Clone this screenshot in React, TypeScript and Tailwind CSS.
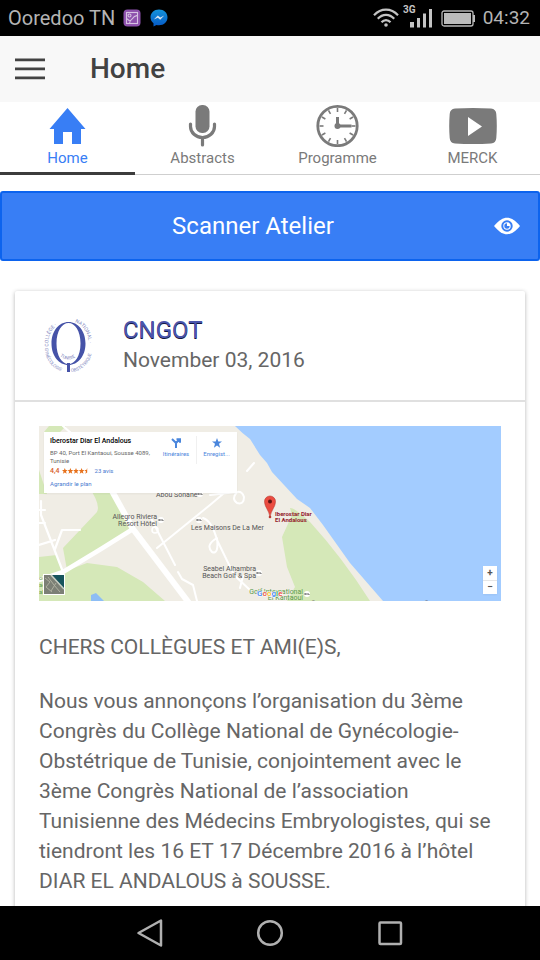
import React from "react";

const tickAngles = [0, 30, 60, 90, 120, 150, 180, 210, 240, 270, 300, 330];

function StatusBar() {
  return (
    <div className="flex h-9 shrink-0 items-center bg-black pr-[10px] pl-2 text-[#b4b4b4]">
      <span className="text-[20px] leading-9">Ooredoo TN</span>
      <svg className="ml-2 h-[18px] w-[18px]" viewBox="0 0 18 18" fill="none" aria-hidden="true">
        <rect x="0.5" y="0.5" width="17" height="17" rx="4" fill="#8e52ad" />
        <g stroke="#d6c2e2" strokeWidth="1.1">
          <rect x="3.5" y="3.5" width="11" height="11" />
          <circle cx="6.5" cy="6.5" r="1.5" />
          <path d="M6.5 14.5C7 10 9 11 10 9s2-2 4.500-2.500M3.500 9.500l4 3" />
        </g>
      </svg>
      <svg className="ml-[9px] h-[18px] w-[18px]" viewBox="0 0 18 18" aria-hidden="true">
        <defs>
          <linearGradient id="chat" x1="0" y1="0" x2="0" y2="1">
            <stop offset="0" stopColor="#1494dc" />
            <stop offset="1" stopColor="#0658c4" />
          </linearGradient>
        </defs>
        <path d="M9 0.500C4 0.500 0.500 4 0.500 8.300c0 2.500 1.200 4.500 3 6V17.500l3-1.500c.8.200 1.600.3 2.500.3 5 0 8.500-3.500 8.500-8S14 .5 9 .5Z" fill="url(#chat)" />
        <path d="M3.800 10.500 7.800 6.500l2.500 2 3.900-2-4 4.200-2.400-2Z" fill="#d5e5f2" />
      </svg>
      <svg className="ml-auto h-[20px] w-[26px]" viewBox="0 0 26 20" fill="none" stroke="#c4c4c4" strokeWidth="2.200" aria-hidden="true">
        <path d="M1 7.200C8-.3 18-.3 25 7.200M4.800 10.800C9.500 5.600 16.500 5.600 21.200 10.800M8.500 14.200c2.600-2.900 6.400-2.900 9 0" />
        <circle cx="13" cy="17" r="1.800" fill="#c4c4c4" stroke="none" />
      </svg>
      <div className="flex h-9 items-start">
        <span className="ml-1 mt-1 text-[10px] leading-3 font-bold text-[#c4c4c4]">3G</span>
        <svg className="-ml-[6px] mt-2 h-5 w-6" viewBox="0 0 24 20" fill="#c4c4c4" aria-hidden="true">
          <path d="M0 14h4v5.500H0zM7 10h3v9.500H7zM13 5.500h3v14h-3zM19 1h3v18.500h-3z" />
        </svg>
      </div>
      <svg className="ml-[7px] h-[17px] w-[35px]" viewBox="0 0 35 17" aria-hidden="true">
        <rect x="1" y="1" width="31" height="15" rx="2" fill="none" stroke="#b8b8b8" strokeWidth="1.300" />
        <rect x="3" y="3" width="27" height="11" fill="#bcbcbc" />
        <path d="M32 5h2v7h-2z" fill="#bcbcbc" />
      </svg>
      <span className="ml-[7px] text-[19px] leading-9">04:32</span>
    </div>
  );
}

function HomeIcon() {
  return (
    <svg className="h-11 w-12" viewBox="0 0 48 44" fill="currentColor" aria-hidden="true">
      <path d="M23.500 5 41.500 26H37V41H28V29H19V41H10V26H5.500Z" />
    </svg>
  );
}

function MicIcon() {
  return (
    <svg className="h-11 w-12" viewBox="0 0 48 44" aria-hidden="true">
      <rect x="16.500" y="2" width="14" height="28" rx="6.500" fill="currentColor" />
      <path d="M11.500 21v2.500a12 11 0 0 0 24 0V21M23.500 35v7" fill="none" stroke="currentColor" strokeWidth="3.200" strokeLinecap="round" />
    </svg>
  );
}

function ClockIcon() {
  return (
    <svg className="h-11 w-12" viewBox="0 0 48 44" fill="none" stroke="currentColor" aria-hidden="true">
      <circle cx="23.500" cy="23" r="19.700" strokeWidth="2.800" />
      {tickAngles.map((a) => (
        <path key={a} d="M23.500 5v4" strokeWidth="1.600" transform={`rotate(${a} 23.5 23)`} />
      ))}
      <path d="M23.500 14v9h14" strokeWidth="3" />
      <circle cx="23.500" cy="23" r="3" fill="currentColor" stroke="none" />
    </svg>
  );
}

function VideoIcon() {
  return (
    <svg className="h-11 w-12" viewBox="0 0 48 44" aria-hidden="true">
      <path d="M6 5.500Q24 4.300 42 5.500Q47 6 47.300 11Q48.300 23 47.300 35Q47 40 42 40.500Q24 41.700 6 40.500Q1 40 .700 35Q-.300 23 .700 11Q1 6 6 5.500Z" fill="currentColor" />
      <path d="M19 14v19l14-9.500Z" fill="#fff" />
    </svg>
  );
}

const tabs = [
  { label: "Home", icon: HomeIcon, active: true },
  { label: "Abstracts", icon: MicIcon, active: false },
  { label: "Programme", icon: ClockIcon, active: false },
  { label: "MERCK", icon: VideoIcon, active: false },
];

function Tabs() {
  return (
    <nav className="grid shrink-0 grid-cols-4 bg-white">
      {tabs.map(({ label, icon: Icon, active }) => (
        <button
          key={label}
          type="button"
          aria-current={active ? "page" : undefined}
          className={
            active
              ? "flex h-[73px] flex-col items-center border-b-3 border-[#3c3c3c] pt-px text-[#387ef5]"
              : "flex h-[73px] flex-col items-center border-b border-[#cfcfcf] pt-px text-[#7a7a7a]"
          }
        >
          <Icon />
          <span className="text-[15px] leading-[22px]">{label}</span>
        </button>
      ))}
    </nav>
  );
}

function CollegeLogo() {
  return (
    <svg className="h-14 w-[60px] shrink-0" viewBox="1 1 60 56" aria-hidden="true">
      <defs>
        <path id="ring-left" d="M11 32A20 22 0 0 1 25 5" />
        <path id="ring-right" d="M37 5A20 22 0 0 1 50 31" />
        <path id="ring-bottom-left" d="M7 31A22 24 0 0 0 29 55" />
        <path id="ring-bottom-right" d="M33 55A22 24 0 0 0 54 30" />
        <path id="ring-inner" d="M22 39Q30 46 39 39" />
      </defs>
      <path fillRule="evenodd" fill="#4653a8" d="M30.500 5C21 5 13.500 14 13.500 26.500S21 48 30.500 48 47.500 39 47.500 26.500 40 5 30.500 5Zm0 1C37 6 42.500 14 42.500 26.500S37 47 30.500 47 18.500 39 18.500 26.500 24 6 30.500 6Z" />
      <path d="M29 46h3v9h-3z" fill="#4653a8" />
      <g fill="#7c84bd" fontFamily="Roboto, sans-serif" fontSize="5">
        <text><textPath href="#ring-left">· COLLÈGE ·</textPath></text>
        <text><textPath href="#ring-right">NATIONAL ·</textPath></text>
        <text fontSize="4.500"><textPath href="#ring-bottom-left">GYNÉCOLOGIE</textPath></text>
        <text fontSize="4.500"><textPath href="#ring-bottom-right">OBSTÉTRIQUE</textPath></text>
        <text fontSize="4.500"><textPath href="#ring-inner">TUNISIE</textPath></text>
      </g>
    </svg>
  );
}

function MapDrawing() {
  return (
    <svg className="block h-full w-full" viewBox="0 0 462 175" preserveAspectRatio="xMinYMin slice" role="img" aria-label="Iberostar Diar El Andalous">
      <rect width="462" height="175" fill="#f0ede5" />
      <g fill="#d5e8b8">
        <path d="M10 0h17l-6 6H5ZM0 44l8 24H0ZM48 60h22l11 24 11 22-64 38-4-22 34-36q4-8-9-26ZM0 131l18-2 6 17 24-9 30 4 26 15 22 19H0Z" />
        <path d="M251 82q4-1 20 14 32 35 60 79h-83l8-14-8-20-5-30 10-22Z" />
      </g>
      <path d="M52 175v-6l5-2 8 8Z" fill="#8dbdf5" />
      <path d="M196 0q8 8 15 13l10 16 7 8 5 9 25 27 13 9 13 17 27 38 33 38H462V0Z" fill="#a3ccff" />
      <g fill="none" stroke="#fff" strokeLinecap="round" strokeLinejoin="round">
        <path d="M68 56 94 103 150 177" strokeWidth="6" />
        <path d="M94 103 62 123 24 146 0 154" strokeWidth="4.500" />
        <path d="M2 75v14l22 57M0 119l16-5M16 123l7-19h18M0 84h6M0 97h6M24 0l9 8" strokeWidth="2.200" />
        <path d="M118 122 171 79 197 57M208 45l7-8M112 92l7 14 17 33M139 146l4 7 11 6 4 16M164 92q9 3 14 22l17 35 16 15M198 66q-6 7 0 11 7 2 7-6-2-6-7-5ZM178 112q-12 7-5 14 7 3 5-14ZM171 69l27-3M204 150l-3 12" strokeWidth="2" />
        <circle cx="116" cy="104" r="3" strokeWidth="1.500" />
      </g>
      <g fontFamily="Roboto, sans-serif" fontSize="7" fill="#555">
        <text x="117" y="71">Abou Sonane</text>
        <text x="118" y="93" textAnchor="end">Allegro Riviera</text>
        <text x="118" y="100" textAnchor="end">Resort Hôtel</text>
        <text x="152" y="104">Les Maisons De La Mer</text>
        <text x="217" y="145" textAnchor="end">Seabel Alhambra</text>
        <text x="217" y="152" textAnchor="end">Beach Golf &amp; Spa</text>
        <g fill="#5c9a4c">
          <text x="264" y="168" textAnchor="end">Golf International</text>
          <text x="264" y="174" textAnchor="end">El Kantaoui</text>
          <text x="0" y="154" fontSize="6">or</text>
          <text x="0" y="161" fontSize="6">ac</text>
          <text x="0" y="168" fontSize="6">al</text>
        </g>
        <text x="272" y="179" fontSize="6">©2016 Google - Données cartographiques ©2016 Google</text>
        <g fill="#93202c" fontWeight="700" fontSize="6">
          <text x="236" y="90">Iberostar Diar</text>
          <text x="236" y="96">El Andalous</text>
        </g>
        <text x="218" y="170" fontSize="8" fontWeight="500" stroke="#fff" strokeWidth="1" paintOrder="stroke">
          <tspan fill="#4285f4">G</tspan><tspan fill="#ea4335">o</tspan><tspan fill="#fbbc05">o</tspan><tspan fill="#4285f4">g</tspan><tspan fill="#34a853">l</tspan><tspan fill="#ea4335">e</tspan>
        </text>
      </g>
      {[[122, 94], [160, 94], [220, 147], [161, 68], [268, 168]].map(([x, y]) => (
        <g key={x}>
          <circle cx={x} cy={y} r="3" fill="#fff" />
          <path d={`M${x - 2} ${y + 1}v-2M${x - 2} ${y}h4v1`} stroke="#666" strokeWidth="1" fill="none" />
        </g>
      ))}
      <path d="M231 91C230 84 225.500 81 225.500 75.500a5.500 5.500 0 0 1 11 0C236.500 81 232 84 231 91Z" fill="#ea4c40" stroke="#b93a33" strokeWidth=".6" />
      <circle cx="231" cy="75.500" r="2" fill="#5d1413" />
      <circle cx="231" cy="91" r="1.300" fill="#b93a33" />
      <rect x="4" y="148" width="22" height="21" fill="#fff" />
      <rect x="5" y="149" width="20" height="19" fill="#7c8076" />
      <path d="M13 149h12v14Z" fill="#17545c" />
      <path d="m12 149 13 14" stroke="#c8cfc4" strokeWidth="1.500" />
      <path d="m6 152 5 4-4 5 6 5M9 151l6 8 6 7M17 157l-5 8" stroke="#afb0a0" strokeWidth="1" fill="none" />
    </svg>
  );
}

function VenueMap() {
  return (
    <div className="relative h-[175px] overflow-hidden">
      <MapDrawing />
      <div className="absolute top-[6px] left-[5px] flex h-[61px] w-[193px] bg-white pt-1 pl-[6px] shadow-xs">
        <div className="w-[106px] shrink-0 text-[6px] leading-2 whitespace-nowrap text-[#666]">
          <p className="text-[7px] leading-[10px] font-medium text-black">Iberostar Diar El Andalous</p>
          <p className="mt-[3px]">BP 40, Port El Kantaoui, Sousse 4089,</p>
          <p>Tunisie</p>
          <p className="mt-[2px] flex items-center">
            <span className="text-[7px] font-medium text-[#d8602a]">4,4</span>
            <svg className="ml-[2px] h-[6px] w-7" viewBox="0 0 28 6" fill="#e7711b" aria-hidden="true">
              {[0, 1, 2, 3].map((i) => (
                <path key={i} transform={`translate(${i * 5.6} 0)`} d="M2.800 0l.8 2h2L4 3.400l.7 2.300-1.900-1.300L.9 5.700l.7-2.300L0 2h2Z" />
              ))}
              <path transform="translate(22.4 0)" d="M2.800 0v4.400L.9 5.700l.7-2.300L0 2h2Z" />
            </svg>
            <a href="#avis" className="ml-[5px] text-[#4a7bd0]">23 avis</a>
          </p>
          <a href="#plan" className="mt-[5px] block text-[#4a7bd0]">Agrandir le plan</a>
        </div>
        <a href="#itineraires" className="flex w-[40px] flex-col items-center pt-[2px] text-[6px] leading-2 text-[#4a86dc]">
          <svg className="h-[10px] w-[10px]" viewBox="0 0 10 10" fill="none" stroke="#4a86dc" strokeWidth="2" aria-hidden="true">
            <path d="M5 10V5L1 1M5 5l3-3M5.500 1.200H9v3.500" />
          </svg>
          <span className="mt-[2px]">Itinéraires</span>
        </a>
        <a href="#enregistrer" className="flex h-7 w-[40px] flex-col items-center border-l border-[#f0f0f0] pt-[2px] text-[6px] leading-2 text-[#4a86dc]">
          <svg className="h-[10px] w-[10px]" viewBox="0 0 10 10" fill="#4a86dc" aria-hidden="true">
            <path d="m5 0 1.300 3.500H10L7 5.800 8.100 9.700 5 7.400 1.900 9.700 3 5.800 0 3.500h3.700Z" />
          </svg>
          <span className="mt-[2px]">Enregist...</span>
        </a>
      </div>
      <div className="absolute right-1 bottom-[7px] flex h-7 w-[14px] flex-col divide-y divide-[#e6e6e6] bg-white text-[10px] font-bold text-[#555] shadow-xs">
        <button type="button" aria-label="Zoom in" className="flex flex-1 items-center justify-center leading-3">+</button>
        <button type="button" aria-label="Zoom out" className="flex flex-1 items-center justify-center leading-3">−</button>
      </div>
    </div>
  );
}

function NavBar() {
  return (
    <div className="flex h-[54px] shrink-0 items-center justify-center gap-[90px] bg-black text-[#b0b0b0]">
      <button type="button" aria-label="Back">
        <svg className="h-[30px] w-[30px]" viewBox="0 0 30 30" fill="none" stroke="currentColor" strokeWidth="2.500" strokeLinejoin="round">
          <path d="M26 2.500v25L3.500 15Z" />
        </svg>
      </button>
      <button type="button" aria-label="Home screen">
        <svg className="h-[30px] w-[30px]" viewBox="0 0 30 30" fill="none" stroke="currentColor" strokeWidth="2.500">
          <circle cx="15" cy="15" r="11.800" />
        </svg>
      </button>
      <button type="button" aria-label="Recent apps">
        <svg className="h-[30px] w-[30px]" viewBox="0 0 30 30" fill="none" stroke="currentColor" strokeWidth="2.500">
          <rect x="4.500" y="4.500" width="21.500" height="21.500" rx="1" />
        </svg>
      </button>
    </div>
  );
}

export default function App() {
  return (
    <div className="flex h-screen flex-col overflow-hidden bg-white font-[Roboto,sans-serif]">
      <StatusBar />
      <header className="flex h-[66px] shrink-0 items-center gap-[45px] bg-[#f8f8f8] px-[15px] text-[#424242]">
        <button type="button" aria-label="Menu">
          <svg className="h-6 w-[30px]" viewBox="0 0 30 24" fill="currentColor">
            <path d="M0 1.500h30v2.700H0zM0 10.500h30v2.700H0zM0 19.500h30v2.700H0z" />
          </svg>
        </button>
        <h1 className="text-[28px] leading-10 font-medium">Home</h1>
      </header>
      <Tabs />
      <main className="min-h-0 flex-1 overflow-hidden pt-4">
        <button type="button" className="relative block h-[70px] w-full rounded-[3px] border-2 border-[#0c63ee] bg-[#387ef5] pr-[34px] text-[24px] text-white">
          Scanner Atelier
          <svg className="absolute top-6 right-[18px] h-[18px] w-[26px]" viewBox="0 0 26 18" aria-hidden="true">
            <path d="M0 9C5 3 9 .7 13 .7S21 3 26 9c-5 6-9 8.300-13 8.300S5 15 0 9Z" fill="#fff" />
            <circle cx="13" cy="9" r="4.700" fill="none" stroke="#387ef5" strokeWidth="2" />
            <path d="M13 6.300a2.700 2.700 0 1 0 2.700 2.700H13Z" fill="#387ef5" />
          </svg>
        </button>
        <article className="mx-[15px] mt-[30px] rounded-xs bg-white text-[21px] leading-[30px] text-[#666] shadow-[0_1px_4px_rgba(0,0,0,0.3)]">
          <header className="flex h-[111px] items-center gap-6 border-b-2 border-[#e0e0e0] px-6">
            <CollegeLogo />
            <div className="pb-px">
              <h2 className="text-[24px] leading-[30px] text-[#4a55ab] [text-shadow:0_1px_0_#111640]">CNGOT</h2>
              <p>November 03, 2016</p>
            </div>
          </header>
          <div className="px-6 pt-6 pb-6">
            <VenueMap />
            <p className="mt-[31px]">CHERS COLLÈGUES ET AMI(E)S,</p>
            <p className="mt-6">
              Nous vous annonçons l’organisation du 3ème Congrès du Collège National de Gynécologie-Obstétrique de Tunisie, conjointement avec le 3ème Congrès National de l’association Tunisienne des Médecins Embryologistes, qui se tiendront les 16 ET 17 Décembre 2016 à l’hôtel DIAR EL ANDALOUS à SOUSSE.
            </p>
          </div>
        </article>
      </main>
      <NavBar />
    </div>
  );
}
